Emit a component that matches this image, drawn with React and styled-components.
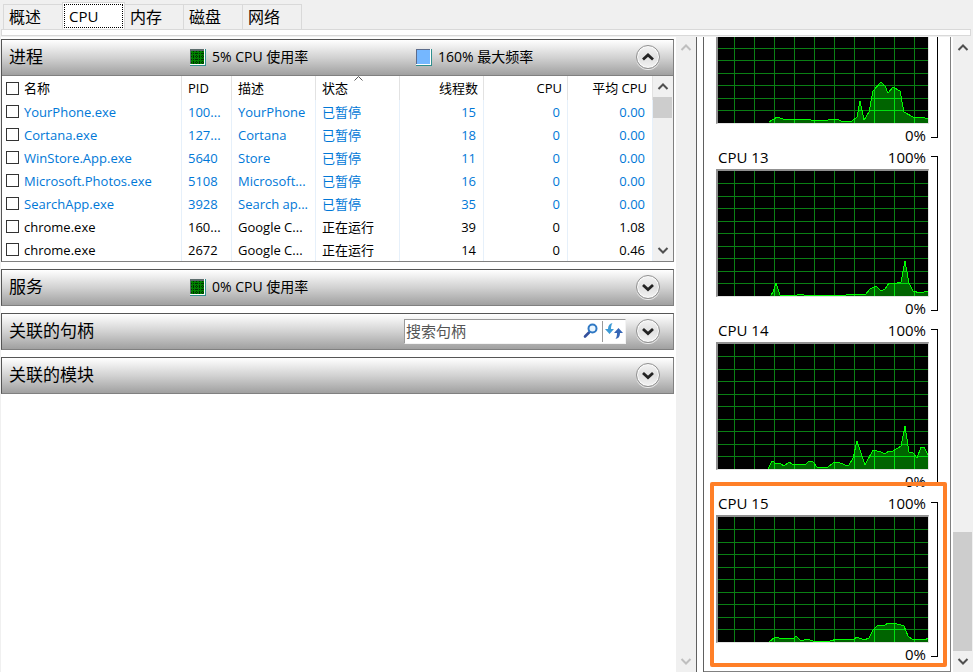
import { useId } from "react";
import styled, { createGlobalStyle } from "styled-components";

const GlobalStyle = createGlobalStyle`
  * {
    box-sizing: border-box;
  }

  body {
    margin: 0;
    background-color: #f0f0f0;
    color: #000;
    font-family: "Open Sans", "Noto Sans CJK SC", sans-serif;
    font-size: 13px;
  }

  button,
  input {
    font-family: inherit;
    color: inherit;
  }
`;

const Window = styled.div`
  display: flex;
  flex-direction: column;
  height: 100vh;
  overflow: hidden;
`;

const TabBar = styled.nav`
  flex: none;
  display: flex;
  align-items: flex-end;
  height: 29px;
  padding-left: 3px;
`;

const Tab = styled.button`
  width: ${({ $active }) => ($active ? 63 : 60)}px;
  height: ${({ $active }) => ($active ? 27 : 25)}px;
  padding: ${({ $active }) => ($active ? "1px" : "0 0 0 5px")};
  border: 1px solid #d9d9d9;
  border-bottom: none;
  margin-right: -1px;
  background-color: ${({ $active }) => ($active ? "#fff" : "#f0f0f0")};
  font-size: 16px;
  line-height: 24px;
  text-align: left;
`;

const FocusBox = styled.span`
  display: block;
  height: 24px;
  padding-left: 4px;
  border: 1px dotted #000;
  font-size: 15px;
  line-height: 22px;
`;

const TabStrip = styled.div`
  flex: none;
  height: 7px;
  margin: 0 2px 1px 1px;
  border: 1px solid #d9d9d9;
  background-color: #fff;
`;

const Content = styled.main`
  flex: 1;
  min-height: 0;
  display: flex;
  margin-left: 1px;
  background-color: #fff;
`;

const LeftPane = styled.div`
  flex: 1;
  min-width: 0;
  display: flex;
  flex-direction: column;
  gap: 7px;
  padding: 2px 2px 0 0;
`;

const Section = styled.section`
  border: 1px solid #808080;
  border-top-color: #555;
  border-left-color: #555;
`;

const SectionHeader = styled.header`
  display: flex;
  align-items: center;
  height: ${({ $open }) => ($open ? 36 : 35)}px;
  padding: 0 13px 1px 7px;
  border-bottom: ${({ $open }) => ($open ? "1px solid #808080" : "none")};
  background: linear-gradient(#fff, #d2d2d2 50%, #a0a0a0);
`;

const SectionTitle = styled.h2`
  flex: none;
  width: 181px;
  margin: 0;
  font-size: 17px;
  font-weight: 400;
  line-height: 24px;
`;

const Stat = styled.div`
  flex: 0 0 226px;
  display: flex;
  align-items: center;
  gap: 6px;
  font-size: 14px;
  line-height: 20px;

  & + & {
    flex-basis: auto;
  }
`;

const Swatch = styled.svg`
  width: 16px;
  height: 17px;
`;

const RoundButton = styled.button`
  flex: none;
  width: 24px;
  height: 24px;
  margin-left: auto;
  padding: 0;
  border: 1px solid #909090;
  border-radius: 50%;
  background: linear-gradient(#f4f4f4, #e0e0e0 50%, #f2f2f2);
  box-shadow: inset 0 0 0 1px #fafafa, 0 1px 0 #eee;

  svg {
    display: block;
    margin: auto;
  }
`;

const SearchBox = styled.div`
  display: flex;
  align-items: center;
  width: 222px;
  height: 25px;
  margin: 0 10px 0 auto;
  border: 1px solid #f4f4f4;
  border-top-color: #999;
  border-left-color: #999;
  background-color: #fff;

  & + ${RoundButton} {
    margin-left: 0;
  }
`;

const SearchInput = styled.input`
  flex: 1;
  min-width: 0;
  height: 22px;
  padding: 0 1px;
  border: none;
  outline: none;
  background: transparent;
  font-size: 15px;

  &::placeholder {
    color: #555;
    opacity: 1;
  }
`;

const SearchButton = styled.button`
  width: 23px;
  height: 21px;
  padding: 0;
  border: none;
  border-left: ${({ $divided }) => ($divided ? "1px solid #999" : "none")};
  background: transparent;

  svg {
    display: block;
    margin: auto;
  }
`;

const ListArea = styled.div`
  display: flex;
`;

const Table = styled.table`
  flex: 1;
  min-width: 0;
  table-layout: fixed;
  border-collapse: separate;
  border-spacing: 0;
  line-height: 22px;
`;

const Col = styled.col`
  width: ${({ $width }) => $width};
`;

const HeadCell = styled.th`
  position: relative;
  height: 24px;
  padding: ${({ $number }) => ($number ? "0 5px 0 0" : "0 0 0 6px")};
  border-right: 1px solid #e2e2e2;
  font-weight: 400;
  text-align: ${({ $number }) => ($number ? "right" : "left")};
  white-space: nowrap;

  &:first-child {
    padding-left: 4px;
  }
`;

const SortMark = styled.svg`
  position: absolute;
  top: 0;
  left: 50%;
  margin-left: -4px;
`;

const Row = styled.tr`
  color: ${({ $suspended }) => ($suspended ? "#0078d7" : "#000")};
`;

const Cell = styled.td`
  height: 23px;
  padding: ${({ $number }) => ($number ? "0 7px 0 0" : "0 0 0 6px")};
  border-right: 1px solid #e6f0fa;
  overflow: hidden;
  text-align: ${({ $number }) => ($number ? "right" : "left")};
  white-space: nowrap;

  &:first-child {
    padding-left: 4px;
  }
`;

const CheckLabel = styled.label`
  display: flex;
  align-items: center;
  gap: 5px;
`;

const Checkbox = styled.input`
  appearance: none;
  flex: none;
  width: 13px;
  height: 13px;
  margin: 0;
  border: 1px solid #333;
  background-color: #fff;

  &:checked {
    background-color: #0078d7;
  }
`;

const ScrollTrack = styled.div`
  flex: none;
  display: flex;
  flex-direction: column;
  width: 20px;
  background-color: #f0f0f0;
`;

const ScrollButton = styled.button`
  flex: none;
  height: 21px;
  padding: 0;
  border: none;
  background: transparent;
  color: ${({ $disabled }) => ($disabled ? "#bfbfbf" : "#505050")};

  svg {
    display: block;
    margin: auto;
  }
`;

const ScrollSpace = styled.div`
  flex: ${({ $grow }) => $grow};
`;

const ScrollThumb = styled.div`
  flex: ${({ $grow }) => $grow};
  min-height: 21px;
  margin-right: 1px;
  background-color: #cdcdcd;
`;

const Splitter = styled.div`
  flex: none;
  width: 8px;
  border: solid #606060;
  border-width: 0 1px;
`;

const ChartPane = styled.aside`
  flex: none;
  display: flex;
  flex-direction: column;
  justify-content: flex-end;
  width: 247px;
  margin-right: 2px;
  padding-bottom: 6px;
  border-right: 1px solid #808080;
  border-bottom: 1px solid #808080;
  overflow: hidden;
`;

const ChartBlock = styled.article`
  position: relative;
  flex: none;
  display: flex;
  gap: 2px;
  padding: 0 12px;
  font-size: 15px;

  &::after {
    content: "";
    display: ${({ $marked }) => ($marked ? "block" : "none")};
    position: absolute;
    inset: -10px 3px -2px 6px;
    border: 4px solid #ff7f27;
    border-radius: 2px;
  }
`;

const ChartBody = styled.div`
  flex: 1;
  min-width: 0;
`;

const ChartCaption = styled.div`
  display: flex;
  justify-content: ${({ $end }) => ($end ? "flex-end" : "space-between")};
  height: ${({ $end }) => ($end ? 22 : 23)}px;
  padding: 0 3px 0 2px;
  line-height: 22px;
`;

const ChartFrame = styled.div`
  height: 128px;
  border: 2px solid #909090;
  border-right: 1px solid #e3e3e3;
  border-bottom: 1px solid #e3e3e3;
  background-color: #000;

  svg {
    display: block;
    width: 100%;
    height: 100%;
  }
`;

const ChartAxis = styled.div`
  width: 7px;
  margin: 10px 0 8px;
  border: 1px solid #000;
  border-left: none;
`;

const tabs = ["概述", "CPU", "内存", "磁盘", "网络"];

const columns = [
  { title: "名称", width: "auto" },
  { title: "PID", width: "50px" },
  { title: "描述", width: "84px" },
  { title: "状态", width: "84px", sorted: true },
  { title: "线程数", width: "84px", number: true },
  { title: "CPU", width: "84px", number: true },
  { title: "平均 CPU", width: "85px", number: true },
];

const processes = [
  ["YourPhone.exe", "100...", "YourPhone", "已暂停", "15", "0", "0.00"],
  ["Cortana.exe", "127...", "Cortana", "已暂停", "18", "0", "0.00"],
  ["WinStore.App.exe", "5640", "Store", "已暂停", "11", "0", "0.00"],
  ["Microsoft.Photos.exe", "5108", "Microsoft...", "已暂停", "16", "0", "0.00"],
  ["SearchApp.exe", "3928", "Search ap...", "已暂停", "35", "0", "0.00"],
  ["chrome.exe", "160...", "Google C...", "正在运行", "39", "0", "1.08"],
  ["chrome.exe", "2672", "Google C...", "正在运行", "14", "0", "0.46"],
];

// the first chart is scrolled partly out of the pane, so it has no caption
const charts = [
  {
    id: 12,
    points:
      "51,124 59,119 65,121 74,122 84,121 102,123 110,122 119,121 123,123 134,123 139,119 142,103 146,122 151,114 155,93 163,84 167,88 170,95 175,89 182,93 186,114 195,119 204,119 210,121",
  },
  {
    id: 13,
    name: "CPU 13",
    points:
      "53,124 55,121 58,112 62,124 79,124 82,123 85,123 86,124 128,124 130,123 132,123 135,124 137,123 145,123 147,124 152,118 158,115 163,120 167,118 171,112 175,113 183,111 187,90 191,112 195,120 202,122 210,120",
  },
  {
    id: 14,
    name: "CPU 14",
    points:
      "50,125 54,117 59,120 62,119 66,122 71,118 74,120 87,121 91,117 95,118 99,123 102,124 110,123 115,119 120,118 127,121 131,121 135,114 139,97 143,109 147,121 155,106 163,108 167,110 171,107 175,107 183,102 187,82 191,108 195,109 199,114 203,103 206,103 210,111",
  },
  {
    id: 15,
    name: "CPU 15",
    marked: true,
    points:
      "51,125 57,120 65,122 70,121 75,122 78,119 82,123 86,123 89,122 95,124 112,124 119,122 135,123 139,120 146,123 151,121 155,113 159,109 167,108 170,106 176,106 186,109 190,119 195,123 202,122 207,123 210,121",
  },
];

const gridPath =
  [12, 25, 37, 50, 62, 75, 87, 100, 112].map((y) => `M0 ${y + 0.5}H210`).join("") +
  [16, 36, 56, 76, 96, 116, 136, 156, 176, 196].map((x) => `M${x + 0.5} 0V125`).join("");

const Chevron = ({ up }) => (
  <svg width="12" height="12" viewBox="0 0 12 12" fill="none" stroke="currentColor">
    <path d={up ? "M1.5 8 6 3.500l4.500 4.500" : "M1.5 3 6 7.500l4.500-4.500"} strokeWidth="2" />
  </svg>
);

const RoundChevron = ({ up }) => (
  <svg width="14" height="12" viewBox="0 0 14 12" fill="none" stroke="#222">
    <path d={up ? "M2 8.5 7 4l5 4.5" : "M2 4 7 8.5 12 4"} strokeWidth="2.8" />
  </svg>
);

const GreenSwatch = () => (
  <Swatch viewBox="0 0 16 17">
    <path d="M0 0h16v17H0z" fill="#2f8f8f" />
    <path d="M0 0h15v16H0z" fill="#fff" />
    <path d="M0 0h14v15H0z" fill="#5c6c6c" />
    <path d="M1 2h13v13H1z" fill="#008000" />
    <path
      d="M3.5 2v13M6.5 2v13M9.5 2v13M12.5 2v13M1 4.5h13M1 7.5h13M1 10.5h13M1 13.5h13"
      stroke="#003000"
      strokeDasharray="1 1"
    />
  </Swatch>
);

const BlueSwatch = () => (
  <Swatch viewBox="0 0 16 17">
    <path d="M0 0h16v17H0z" fill="#2f8f8f" />
    <path d="M0 0h15v16H0z" fill="#fff" />
    <path d="M0 0h14v15H0z" fill="#5c6c8c" />
    <path d="M1 1h13v14H1z" fill="#75b7ff" />
  </Swatch>
);

const Scrollbar = ({ disabled, before = 0, thumb = 0, after = 0 }) => (
  <ScrollTrack>
    <ScrollButton aria-label="向上滚动" $disabled={disabled}>
      <Chevron up />
    </ScrollButton>
    <ScrollSpace $grow={before} />
    {!disabled && <ScrollThumb $grow={thumb} />}
    <ScrollSpace $grow={after} />
    <ScrollButton aria-label="向下滚动" $disabled={disabled}>
      <Chevron />
    </ScrollButton>
  </ScrollTrack>
);

const Toggle = ({ open }) => (
  <RoundButton aria-label={open ? "折叠" : "展开"} aria-expanded={!!open}>
    <RoundChevron up={open} />
  </RoundButton>
);

const ProcessTable = () => (
  <ListArea>
    <Table>
      <colgroup>
        {columns.map((col) => (
          <Col key={col.title} $width={col.width} />
        ))}
      </colgroup>
      <thead>
        <tr>
          {columns.map((col, i) => (
            <HeadCell key={col.title} $number={col.number}>
              {i === 0 ? (
                <CheckLabel>
                  <Checkbox type="checkbox" />
                  {col.title}
                </CheckLabel>
              ) : (
                col.title
              )}
              {col.sorted && (
                <SortMark width="9" height="5" viewBox="0 0 9 5" fill="none" stroke="#555">
                  <path d="M.5 4.5l4-4 4 4" />
                </SortMark>
              )}
            </HeadCell>
          ))}
        </tr>
      </thead>
      <tbody>
        {processes.map(([name, ...rest]) => (
          <Row key={name + rest[0]} $suspended={rest[2] === "已暂停"}>
            <Cell>
              <CheckLabel>
                <Checkbox type="checkbox" />
                {name}
              </CheckLabel>
            </Cell>
            {rest.map((value, i) => (
              <Cell key={columns[i + 1].title} $number={columns[i + 1].number}>
                {value}
              </Cell>
            ))}
          </Row>
        ))}
      </tbody>
    </Table>
    <Scrollbar after={1} />
  </ListArea>
);

const HandleSearch = () => (
  <SearchBox>
    <SearchInput type="text" placeholder="搜索句柄" aria-label="搜索句柄" />
    <SearchButton aria-label="搜索">
      <svg width="16" height="16" viewBox="0 0 16 16" fill="none">
        <path d="M2 13.5 6 9.500" stroke="#34509c" strokeWidth="2.6" strokeLinecap="round" />
        <circle cx="9.5" cy="5.5" r="4" fill="#eaf6ff" stroke="#2f78c4" strokeWidth="2" />
      </svg>
    </SearchButton>
    <SearchButton aria-label="刷新" $divided>
      <svg width="18" height="16" viewBox="0 0 18 16">
        <path d="M7.5 0C4.500 .5 3 2.500 3 6H0l4.500 5L9 6H6C6 3.500 6.500 1.500 7.500 0z" fill="#3d9ad6" />
        <path d="M10.500 16c3-.5 4.500-2.500 4.500-6h3l-4.500-5L9 10h3c0 2.500-.5 4.500-1.500 6z" fill="#3565b5" />
      </svg>
    </SearchButton>
  </SearchBox>
);

const CpuChart = ({ name, points, marked }) => {
  const clipId = useId();
  const area = `50,125 ${points} 210,125`;

  return (
    <ChartBlock $marked={marked}>
      <ChartBody>
        {name && (
          <ChartCaption>
            <span>{name}</span>
            <span>100%</span>
          </ChartCaption>
        )}
        <ChartFrame>
          <svg viewBox="0 0 210 125" preserveAspectRatio="none" shapeRendering="crispEdges">
            <clipPath id={clipId}>
              <polygon points={area} />
            </clipPath>
            <path d={gridPath} stroke="#0a7f14" />
            <polygon points={area} fill="#006400" />
            <path d={gridPath} stroke="#00e010" clipPath={`url(#${clipId})`} />
            <polyline points={points} fill="none" stroke="#00ff00" />
          </svg>
        </ChartFrame>
        <ChartCaption $end>
          <span>0%</span>
        </ChartCaption>
      </ChartBody>
      <ChartAxis />
    </ChartBlock>
  );
};

const App = () => {
  return (
    <Window>
      <GlobalStyle />
      <TabBar role="tablist">
        {tabs.map((tab) => (
          <Tab key={tab} role="tab" aria-selected={tab === "CPU"} $active={tab === "CPU"}>
            {tab === "CPU" ? <FocusBox>{tab}</FocusBox> : tab}
          </Tab>
        ))}
      </TabBar>
      <TabStrip />
      <Content>
        <LeftPane>
          <Section>
            <SectionHeader $open>
              <SectionTitle>进程</SectionTitle>
              <Stat>
                <GreenSwatch />
                5% CPU 使用率
              </Stat>
              <Stat>
                <BlueSwatch />
                160% 最大频率
              </Stat>
              <Toggle open />
            </SectionHeader>
            <ProcessTable />
          </Section>
          <Section>
            <SectionHeader>
              <SectionTitle>服务</SectionTitle>
              <Stat>
                <GreenSwatch />
                0% CPU 使用率
              </Stat>
              <Toggle />
            </SectionHeader>
          </Section>
          <Section>
            <SectionHeader>
              <SectionTitle>关联的句柄</SectionTitle>
              <HandleSearch />
              <Toggle />
            </SectionHeader>
          </Section>
          <Section>
            <SectionHeader>
              <SectionTitle>关联的模块</SectionTitle>
              <Toggle />
            </SectionHeader>
          </Section>
        </LeftPane>
        <Scrollbar disabled after={1} />
        <Splitter />
        <ChartPane>
          {charts.map((chart) => (
            <CpuChart key={chart.id} {...chart} />
          ))}
        </ChartPane>
        <Scrollbar before={4} thumb={1} />
      </Content>
    </Window>
  );
};

export default App;
